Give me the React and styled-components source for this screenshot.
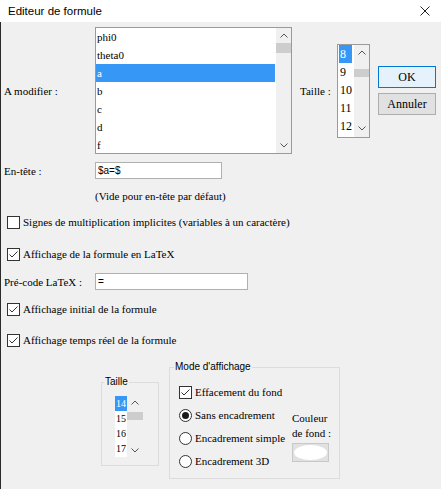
import React from 'react'
import styled, { createGlobalStyle } from 'styled-components'

const GlobalStyle = createGlobalStyle`
  html, body { margin: 0; padding: 0; background: #f0f0f0; }
  * { box-sizing: border-box; }
`

const Window = styled.div`
  width: 441px;
  height: 489px;
  background: #f0f0f0;
  display: flex;
  flex-direction: column;
  overflow: hidden;
  font-family: "Liberation Serif", "Times New Roman", serif;
  font-size: 11px;
  color: #000;
`
const TitleBar = styled.div`
  height: 22px;
  flex-shrink: 0;
  background: #fff;
  display: flex;
  align-items: center;
  justify-content: space-between;
  padding: 0 11px 0 8px;
  font-family: "Liberation Sans", Arial, sans-serif;
  font-size: 11.5px;
`
const Body = styled.div`
  flex: 1;
  border-left: 1px solid #2b2b2b;
  padding-left: 3px;
  display: flex;
  flex-direction: column;
`
const Row = styled.div`
  display: flex;
  align-items: center;
  margin-top: ${p => p.$top || 0}px;
  height: ${p => p.$h}px;
`
const Label = styled.span`
  width: ${p => p.$w}px;
  margin-left: ${p => p.$left || 0}px;
  flex-shrink: 0;
  white-space: nowrap;
`
const ListBox = styled.div`
  width: ${p => p.$w}px;
  height: ${p => p.$h}px;
  border: 1px solid #9a9a9a;
  background: #fff;
  display: flex;
  overflow: hidden;
  flex-shrink: 0;
`
const Items = styled.div`
  flex: 1;
  display: flex;
  flex-direction: column;
  padding-right: ${p => p.$gap || 0}px;
`
const Item = styled.div`
  height: ${p => p.$h || 18}px;
  line-height: ${p => p.$h || 18}px;
  flex-shrink: 0;
  padding-left: 1px;
  margin: 0 ${p => p.$inset || 0}px;
  font-size: ${p => p.$fs || 11}px;
  white-space: nowrap;
  background: ${p => (p.$sel ? '#3797f7' : 'transparent')};
  color: ${p => (p.$sel ? '#fff' : '#000')};
`
const Scroll = styled.div`
  width: ${p => p.$w}px;
  flex-shrink: 0;
  background: #f0f0f0;
  display: flex;
  flex-direction: column;
`
const ArrowCell = styled.div`
  height: ${p => p.$h}px;
  display: flex;
  align-items: center;
  justify-content: center;
`
const Thumb = styled.div`
  height: ${p => p.$h}px;
  margin-top: ${p => p.$top || 0}px;
  background: #cdcdcd;
`
const Spacer = styled.div`
  flex: 1;
`
const Buttons = styled.div`
  display: flex;
  flex-direction: column;
  gap: 5px;
  margin-left: 8px;
`
const Button = styled.div`
  width: 58px;
  height: 22px;
  display: flex;
  align-items: center;
  justify-content: center;
  font-size: 12px;
  border: 1px solid ${p => (p.$primary ? '#0078d7' : '#adadad')};
  background: ${p => (p.$primary ? '#e5f1fb' : '#e1e1e1')};
`
const Input = styled.div`
  width: ${p => p.$w}px;
  height: 17px;
  border: 1px solid #b0b0b0;
  background: #fff;
  padding-left: 2px;
  display: flex;
  align-items: center;
  font-family: "Liberation Sans", Arial, sans-serif;
  font-size: 10px;
`
const Hint = styled.div`
  margin-top: 10px;
  height: 14px;
  line-height: 14px;
  padding-left: 91px;
`
const Check = styled.div`
  display: flex;
  align-items: center;
  gap: 3px;
  margin-top: ${p => p.$top || 0}px;
  margin-left: ${p => p.$left || 0}px;
  height: 16px;
  white-space: nowrap;
`
const Box = styled.span`
  width: 13px;
  height: 13px;
  flex-shrink: 0;
  border: 1px solid #333;
  background: #fff;
  display: inline-flex;
  align-items: center;
  justify-content: center;
`
const Radio = styled.span`
  width: 13px;
  height: 13px;
  flex-shrink: 0;
  border: 1px solid #333;
  border-radius: 50%;
  background: #fff;
  display: inline-flex;
  align-items: center;
  justify-content: center;
  &::after {
    content: '';
    width: 7px;
    height: 7px;
    border-radius: 50%;
    background: ${p => (p.$on ? '#1a1a1a' : 'transparent')};
  }
`
const BottomRow = styled.div`
  display: flex;
  align-items: flex-start;
  gap: 10px;
  padding-left: 97px;
`
const Group = styled.fieldset`
  margin: ${p => p.$top}px 0 0 0;
  padding: 0;
  width: ${p => p.$w}px;
  height: ${p => p.$h}px;
  border: 1px solid #dcdcdc;
  min-width: 0;
`
const Legend = styled.legend`
  margin-left: ${p => p.$left}px;
  padding: 0 1px;
  font-family: "Liberation Sans", Arial, sans-serif;
  font-size: 10px;
  line-height: 12px;
`
const GroupInner = styled.div`
  display: flex;
  padding: ${p => p.$pad};
`
const Options = styled.div`
  width: 113px;
  display: flex;
  flex-direction: column;
  gap: 7px;
`
const ColorCol = styled.div`
  margin-top: 27px;
  display: flex;
  flex-direction: column;
  line-height: 15px;
`
const Swatch = styled.div`
  margin-top: 2px;
  width: 37px;
  height: 19px;
  border: 1px solid #c8c8c8;
  background: #e1e1e1;
  padding: 1px;
  &::after {
    content: '';
    display: block;
    width: 100%;
    height: 100%;
    border-radius: 50%;
    background: #fff;
  }
`
const Column = styled.div`
  width: 12px;
  background: #fff;
  display: flex;
  flex-direction: column;
`

const Chevron = ({ down }) => (
  <svg width="8" height="5" viewBox="0 0 8 5">
    <path d={down ? 'M0.5 0.5 L4 4 L7.5 0.5' : 'M0.5 4.5 L4 1 L7.5 4.5'} fill="none" stroke="#555" strokeWidth="1" />
  </svg>
)

const Tick = () => (
  <svg width="11" height="11" viewBox="0 0 11 11">
    <polyline points="1.5,5.5 4,8 9.5,2.5" fill="none" stroke="#333" strokeWidth="1" />
  </svg>
)

const CheckItem = ({ on, children, top, left }) => (
  <Check $top={top} $left={left}>
    <Box>{on && <Tick />}</Box>
    <span>{children}</span>
  </Check>
)

const RadioItem = ({ on, children }) => (
  <Check>
    <Radio $on={on} />
    <span>{children}</span>
  </Check>
)

const variables = ['phi0', 'theta0', 'a', 'b', 'c', 'd', 'f']
const sizes = ['8', '9', '10', '11', '12']
const smallSizes = ['14', '15', '16', '17']

export default function App() {
  return (
    <Window>
      <GlobalStyle />
      <TitleBar>
        <span>Editeur de formule</span>
        <svg width="10" height="10" viewBox="0 0 10 10">
          <path d="M0.5 0.5 L9.5 9.5 M9.5 0.5 L0.5 9.5" stroke="#222" strokeWidth="1" />
        </svg>
      </TitleBar>
      <Body>
        <Row $top={5} $h={127}>
          <Label $w={91}>A modifier :</Label>
          <ListBox $w={197} $h={127}>
            <Items $gap={1}>
              {variables.map(v => (
                <Item key={v} $sel={v === 'a'}>{v}</Item>
              ))}
            </Items>
            <Scroll $w={15}>
              <ArrowCell $h={15}><Chevron /></ArrowCell>
              <Thumb $h={10} />
              <Spacer />
              <ArrowCell $h={15}><Chevron down /></ArrowCell>
            </Scroll>
          </ListBox>
          <Label $w={37} $left={8}>Taille :</Label>
          <ListBox $w={33} $h={94}>
            <Items $gap={1}>
              {sizes.map(s => (
                <Item key={s} $sel={s === '8'} $inset={1} $fs={12}>{s}</Item>
              ))}
            </Items>
            <Scroll $w={15}>
              <ArrowCell $h={16}><Chevron /></ArrowCell>
              <Thumb $h={8} $top={8} />
              <Spacer />
              <ArrowCell $h={16}><Chevron down /></ArrowCell>
            </Scroll>
          </ListBox>
          <Buttons>
            <Button $primary>OK</Button>
            <Button>Annuler</Button>
          </Buttons>
        </Row>

        <Row $top={8} $h={17}>
          <Label $w={91}>En-tête :</Label>
          <Input $w={127}>$a=$</Input>
        </Row>
        <Hint>(Vide pour en-tête par défaut)</Hint>

        <CheckItem top={11} left={3}>Signes de multiplication implicites (variables à un caractère)</CheckItem>
        <CheckItem on top={16} left={3}>Affichage de la formule en LaTeX</CheckItem>

        <Row $top={11} $h={17}>
          <Label $w={91}>Pré-code LaTeX :</Label>
          <Input $w={153}>=</Input>
        </Row>

        <CheckItem on top={11} left={3}>Affichage initial de la formule</CheckItem>
        <CheckItem on top={15} left={3}>Affichage temps réel de la formule</CheckItem>

        <BottomRow>
          <Group $top={28} $w={58} $h={90}>
            <Legend $left={2}>Taille</Legend>
            <GroupInner $pad="8px 0 0 13px">
              <Column>
                {smallSizes.map(s => (
                  <Item key={s} $h={15} $fs={10} $sel={s === '14'}>{s}</Item>
                ))}
              </Column>
              <Scroll $w={16} style={{ height: 61 }}>
                <ArrowCell $h={13}><Chevron /></ArrowCell>
                <Thumb $h={8} $top={3} />
                <Spacer />
                <ArrowCell $h={13}><Chevron down /></ArrowCell>
              </Scroll>
            </GroupInner>
          </Group>

          <Group $top={13} $w={171} $h={118}>
            <Legend $left={4}>Mode d'affichage</Legend>
            <GroupInner $pad="11px 0 0 9px">
              <Options>
                <CheckItem on>Effacement du fond</CheckItem>
                <RadioItem on>Sans encadrement</RadioItem>
                <RadioItem>Encadrement simple</RadioItem>
                <RadioItem>Encadrement 3D</RadioItem>
              </Options>
              <ColorCol>
                <span>Couleur</span>
                <span>de fond :</span>
                <Swatch />
              </ColorCol>
            </GroupInner>
          </Group>
        </BottomRow>
      </Body>
    </Window>
  )
}
